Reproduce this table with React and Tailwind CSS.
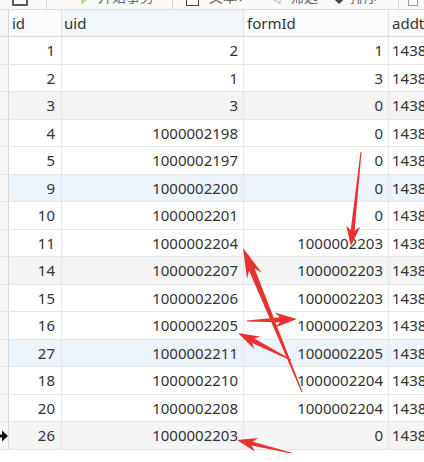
import React from "react";

// 表格数据
const ROWS = [
  { id: 1, uid: "2", formId: "1" },
  { id: 2, uid: "1", formId: "3" },
  { id: 3, uid: "3", formId: "0" },
  { id: 4, uid: "1000002198", formId: "0" },
  { id: 5, uid: "1000002197", formId: "0" },
  { id: 9, uid: "1000002200", formId: "0" },
  { id: 10, uid: "1000002201", formId: "0" },
  { id: 11, uid: "1000002204", formId: "1000002203" },
  { id: 14, uid: "1000002207", formId: "1000002203" },
  { id: 15, uid: "1000002206", formId: "1000002203" },
  { id: 16, uid: "1000002205", formId: "1000002203" },
  { id: 27, uid: "1000002211", formId: "1000002205" },
  { id: 18, uid: "1000002210", formId: "1000002204" },
  { id: 20, uid: "1000002208", formId: "1000002204" },
  { id: 26, uid: "1000002203", formId: "0" },
];

// 截图标注的红色箭头
const ARROWS = [
  { from: [361, 152], to: [351, 246], head: 14, len: 20, neck: 4 },
  { from: [302, 392], to: [243, 248], head: 16, len: 30, neck: 6 },
  { from: [247, 321], to: [297, 319], head: 15, len: 22, neck: 5 },
  { from: [291, 360], to: [238, 333], head: 14, len: 22, neck: 5 },
  { from: [291, 453], to: [237, 440], head: 14, len: 20, neck: 4 },
];

function arrowPoints({ from, to, head, len, neck }) {
  const [x1, y1] = from;
  const [x2, y2] = to;
  const L = Math.hypot(x2 - x1, y2 - y1);
  const ux = (x2 - x1) / L;
  const uy = (y2 - y1) / L;
  const nx = -uy;
  const ny = ux;
  const bx = x2 - ux * len;
  const by = y2 - uy * len;
  const kx = x2 - ux * len * 0.78;
  const ky = y2 - uy * len * 0.78;
  const pts = [
    [x1 + nx * 0.5, y1 + ny * 0.5],
    [kx + (nx * neck) / 2, ky + (ny * neck) / 2],
    [bx + (nx * head) / 2, by + (ny * head) / 2],
    [x2, y2],
    [bx - (nx * head) / 2, by - (ny * head) / 2],
    [kx - (nx * neck) / 2, ky - (ny * neck) / 2],
    [x1 - nx * 0.5, y1 - ny * 0.5],
  ];
  return pts.map((p) => p.map((v) => v.toFixed(1)).join(",")).join(" ");
}

function rowBg(i) {
  if (i % 6 === 2) return "bg-[#f5f5f5]";
  if (i % 6 === 5) return "bg-[#eef4fb]";
  return "bg-white";
}

function Toolbar() {
  return (
    <div className="h-[10px] overflow-hidden flex items-end bg-[#fafafa] border-b border-[#dcdcdc] text-[14px] leading-[16px] text-[#666]">
      <div className="flex items-end mb-[3px] ml-[12px]">
        <span className="block w-[16px] h-[14px] border-2 border-[#555] rounded-[1px]" />
      </div>
      <span className="block w-px h-[20px] bg-[#d6d6d6] ml-[18px]" />
      <div className="flex items-end gap-[8px] ml-[33px] mb-[4px]">
        <svg width="10" height="14" viewBox="0 0 10 14" className="mb-[-1px]">
          <path d="M1 1 L9 7 L1 13 Z" fill="#b7dc9c" />
        </svg>
        <span>开始事务</span>
      </div>
      <span className="block w-px h-[20px] bg-[#d6d6d6] ml-[18px]" />
      <div className="flex items-end gap-[10px] ml-[13px] mb-[3px]">
        <span className="block w-[13px] h-[14px] border border-[#444] bg-white" />
        <span className="mb-[1px]">文本▾</span>
      </div>
      <div className="flex items-end gap-[8px] ml-[24px] mb-[4px]">
        <span className="text-[#999]">◁</span>
        <span>筛选</span>
      </div>
      <div className="flex items-end gap-[4px] ml-[14px] mb-[4px]">
        <span className="text-[#444]">◆</span>
        <span>排序</span>
      </div>
      <span className="block w-px h-[20px] bg-[#d6d6d6] ml-[20px]" />
      <div className="flex items-end ml-[9px] mb-[3px]">
        <span className="block w-[10px] h-[12px] border border-[#999]" />
      </div>
    </div>
  );
}

export default function App() {
  return (
    <div
      className="relative w-[424px] h-[462px] overflow-hidden bg-white text-[#333]"
      style={{ fontFamily: '"Noto Sans", "Noto Sans CJK SC", sans-serif' }}
    >
      <Toolbar />

      {/* 表头 */}
      <div className="grid grid-cols-[9px_53px_182px_145px_1fr] h-[27px] text-[15px] border-b border-[#d9d9d9]">
        <div className="bg-[#f7f7f7] border-r border-[#d9d9d9]" />
        <div className="bg-[#fbfbfb] border-r border-[#e2e2e2] pl-[3px] flex items-center">id</div>
        <div className="bg-[#f2f7fc] border-r border-[#e2e2e2] pl-[2px] flex items-center">uid</div>
        <div className="bg-[#fbfbfb] border-r border-[#e2e2e2] pl-[3px] flex items-center">formId</div>
        <div className="bg-[#fbfbfb] pl-[3px] flex items-center whitespace-nowrap overflow-hidden">addtime</div>
      </div>

      {/* 数据行 */}
      {ROWS.map((r, i) => (
        <div
          key={r.id}
          className={`grid grid-cols-[9px_53px_182px_145px_1fr] text-[15px] border-b border-[#e6e6e6] ${
            i % 2 === 0 ? "h-[28px]" : "h-[27px]"
          } ${rowBg(i)}`}
        >
          <div className="bg-[#f7f7f7] border-r border-[#d9d9d9] flex items-center">
            {i === ROWS.length - 1 && (
              <svg width="8" height="12" viewBox="0 0 8 12">
                <path d="M0 4.5 H2 V0.5 L8 6 L2 11.5 V7.5 H0 Z" fill="#111" />
              </svg>
            )}
          </div>
          <div className="border-r border-[#e6e6e6] pr-[6px] flex items-center justify-end">{r.id}</div>
          <div className="border-r border-[#e6e6e6] pr-[5px] flex items-center justify-end">{r.uid}</div>
          <div className="border-r border-[#e6e6e6] pr-[5px] flex items-center justify-end">{r.formId}</div>
          <div className="pl-[3px] flex items-center whitespace-nowrap overflow-hidden">1438652016</div>
        </div>
      ))}

      {/* 红色箭头标注 */}
      <svg className="absolute inset-0 pointer-events-none" width="424" height="462" viewBox="0 0 424 462">
        {ARROWS.map((a, i) => (
          <polygon key={i} points={arrowPoints(a)} fill="#e8322f" />
        ))}
      </svg>
    </div>
  );
}
